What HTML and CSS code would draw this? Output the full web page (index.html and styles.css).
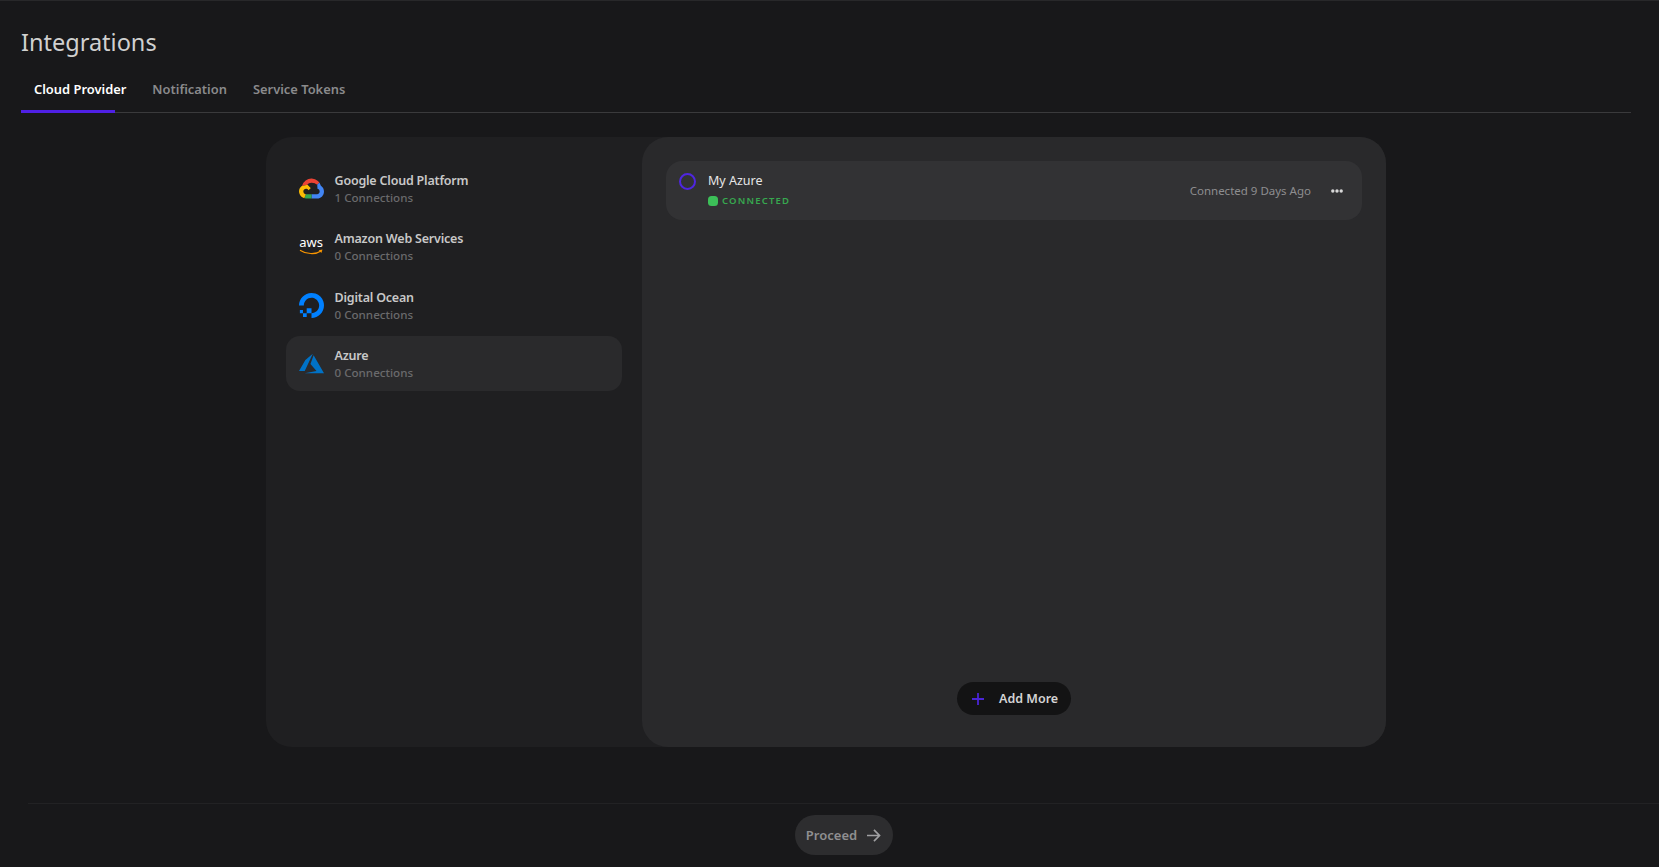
FILE: index.html
```html
<!DOCTYPE html>
<html lang="en">
<head>
    <meta charset="UTF-8">
    <meta name="viewport" content="width=device-width, initial-scale=1.0">
    <title>Integrations</title>
    <link rel="stylesheet" href="styles.css">
</head>
<body>

<div class="page">
    <header class="page-header">
        <h1>Integrations</h1>
        <nav class="tabs">
            <a href="#" class="tab active">Cloud Provider</a>
            <a href="#" class="tab">Notification</a>
            <a href="#" class="tab">Service Tokens</a>
            <span class="tab-indicator"></span>
        </nav>
    </header>

    <main class="content">
        <div class="card">
            <div class="providers">
                <div class="provider">
                    <svg class="provider-icon" viewBox="0 0 24 24">
                        <defs>
                            <clipPath id="gcp-clip">
                                <path d="M12.19 2.38a9.344 9.344 0 0 0-9.234 6.893c.053-.02-.055.013 0 0-3.875 2.551-3.922 8.11-.247 10.941l.006-.007-.007.03a6.717 6.717 0 0 0 4.077 1.356h5.173l.03.03h5.192c6.687.053 9.376-8.605 3.835-12.35a9.365 9.365 0 0 0-2.821-4.552l-.043.043.006-.05A9.344 9.344 0 0 0 12.19 2.38zm-.358 4.146c1.244-.04 2.518.368 3.486 1.15a5.186 5.186 0 0 1 1.862 4.078v.518c3.53-.07 3.53 5.262 0 5.193h-5.193l-.008.009v-.04H6.785a2.59 2.59 0 0 1-1.067-.23h.001a2.597 2.597 0 1 1 3.437-3.437l3.013-3.012A6.747 6.747 0 0 0 8.11 8.24c.018-.01.04-.026.054-.023a5.186 5.186 0 0 1 3.67-1.69z"/>
                            </clipPath>
                        </defs>
                        <g clip-path="url(#gcp-clip)">
                            <polygon fill="#ea4335" points="0,0 24,0 24,2 17.5,8.5 15,7 9,7.5 8.1,8.3 3,9.5 0,9"/>
                            <polygon fill="#4285f4" points="24,2 24,24 12,24 12,17 18,16 17.5,8.5"/>
                            <polygon fill="#34a853" points="12,24 4,24 6.8,17 12,17"/>
                            <polygon fill="#fbbc05" points="0,9 3,9.5 8.1,8.3 12.2,12.5 9.2,15.5 6.8,17 4,24 0,24"/>
                        </g>
                    </svg>
                    <div class="provider-text">
                        <div class="provider-name">Google Cloud Platform</div>
                        <div class="provider-count">1 Connections</div>
                    </div>
                </div>
                <div class="provider">
                    <div class="provider-icon aws-icon">
                        <span class="aws-word">aws</span>
                        <svg class="aws-smile" viewBox="0 0 24 6">
                            <path d="M.5 1.2C6 5 16 6 21.5 2" fill="none" stroke="#f79400" stroke-width="1.2"/>
                            <path d="M19.2 1.2l3.8-.6-1.1 3.4z" fill="#f79400"/>
                        </svg>
                    </div>
                    <div class="provider-text">
                        <div class="provider-name">Amazon Web Services</div>
                        <div class="provider-count">0 Connections</div>
                    </div>
                </div>
                <div class="provider">
                    <svg class="provider-icon" viewBox="0 0 24 24">
                        <path fill="#0080ff" d="M12.04 0C5.408-.02.005 5.37.005 11.992h4.638c0-4.923 4.882-8.731 10.064-6.855a6.95 6.95 0 014.147 4.148c1.889 5.177-1.924 10.055-6.84 10.064v-4.61H7.391v4.623h4.61V24c7.86 0 13.967-7.588 11.397-15.83-1.115-3.59-3.985-6.446-7.575-7.575A12.8 12.8 0 0012.039 0zM7.39 19.362H3.828v3.564H7.39zm-3.563 0v-2.978H.85v2.978z"/>
                    </svg>
                    <div class="provider-text">
                        <div class="provider-name">Digital Ocean</div>
                        <div class="provider-count">0 Connections</div>
                    </div>
                </div>
                <div class="provider selected">
                    <svg class="provider-icon" viewBox="0 0 24 24">
                        <path fill="#0072c6" d="M5.483 21.3H24L14.025 4.013l-3.038 8.347 5.836 6.938L5.483 21.3zM13.23 2.7L6.105 8.677 0 19.253h5.505v.014L13.23 2.7z"/>
                    </svg>
                    <div class="provider-text">
                        <div class="provider-name">Azure</div>
                        <div class="provider-count">0 Connections</div>
                    </div>
                </div>
            </div>

            <div class="connections">
                <div class="connection">
                    <span class="radio"></span>
                    <div class="connection-text">
                        <div class="connection-name">My Azure</div>
                        <div class="connection-status"><span class="status-dot"></span>CONNECTED</div>
                    </div>
                    <span class="connection-time">Connected 9 Days Ago</span>
                    <svg class="more-icon" viewBox="0 0 12 4">
                        <circle cx="1.8" cy="2" r="1.7"/>
                        <circle cx="6" cy="2" r="1.7"/>
                        <circle cx="10.2" cy="2" r="1.7"/>
                    </svg>
                </div>
                <button class="add-more">
                    <svg class="plus-icon" viewBox="0 0 12 12">
                        <path d="M6 0v12M0 6h12" stroke="#4a25d6" stroke-width="1.8"/>
                    </svg>
                    Add More
                </button>
            </div>
        </div>
    </main>

    <footer class="page-footer">
        <button class="proceed">
            Proceed
            <svg class="arrow-icon" viewBox="0 0 16 14">
                <path d="M1 7h13.5M8.5 1l6 6-6 6" fill="none" stroke="#a0a0a2" stroke-width="1.8"/>
            </svg>
        </button>
    </footer>
</div>

</body>
</html>
```

FILE: styles.css
```css
* {
    box-sizing: border-box;
}
body {
    font-family: "Noto Sans", Arial, sans-serif;
    margin: 0;
    padding: 0;
    background-color: #18181a;
    color: #d4d4d4;
}
.page {
    height: 100vh;
    overflow: hidden;
    border-top: 1px solid #28282a;
    display: flex;
    flex-direction: column;
}
.page-header {
    padding: 25px 28px 0 21px;
}
h1 {
    margin: 0;
    font-size: 23.5px;
    font-weight: 400;
    line-height: 32px;
    color: #d0d0d0;
}
.tabs {
    position: relative;
    display: flex;
    margin-top: 7px;
    height: 48px;
    border-bottom: 1px solid #3a3a3c;
}
.tab {
    padding: 14px 13px 0;
    font-size: 12.9px;
    font-weight: 600;
    line-height: 20px;
    text-decoration: none;
    color: #8a8a8c;
}
.tab.active {
    color: #fff;
}
.tab-indicator {
    position: absolute;
    left: 0;
    bottom: -1px;
    width: 94px;
    height: 3px;
    background-color: #4f20e5;
}
.content {
    padding: 24px 28px 0 21px;
    display: flex;
    justify-content: center;
}
.card {
    width: 1120px;
    height: 610px;
    display: flex;
    background-color: #1f1f21;
    border-radius: 26px;
}
.providers {
    width: 376px;
    padding: 23.2px 20px;
    display: flex;
    flex-direction: column;
    gap: 2.8px;
}
.provider {
    height: 55.7px;
    padding: 0 12.5px;
    display: flex;
    align-items: center;
    gap: 11px;
    border-radius: 14px;
}
.provider.selected {
    background-color: #2a2a2c;
}
.provider-icon {
    width: 25px;
    height: 25px;
    flex-shrink: 0;
}
.aws-icon {
    display: flex;
    flex-direction: column;
    align-items: center;
    justify-content: center;
}
.aws-word {
    margin-top: -2px;
    font-size: 13px;
    font-weight: 400;
    line-height: 12px;
    color: #fff;
}
.aws-smile {
    width: 25px;
    height: 6px;
    margin-top: 1px;
    display: block;
}
.provider-name {
    font-size: 12.5px;
    font-weight: 600;
    line-height: 20px;
    letter-spacing: -0.2px;
    color: #c8c8c8;
}
.provider-count {
    margin-top: -2px;
    font-size: 11.6px;
    font-weight: 500;
    line-height: 17px;
    color: #6a6a6c;
}
.connections {
    flex: 1;
    padding: 24px 24px 32px;
    display: flex;
    flex-direction: column;
    background-color: #29292b;
    border-radius: 26px;
}
.connection {
    height: 59px;
    padding: 10px 19px 0 13px;
    display: flex;
    align-items: flex-start;
    background-color: #323234;
    border-radius: 16px;
}
.radio {
    width: 17px;
    height: 17px;
    margin-top: 1.5px;
    border: 2px solid #4f26e0;
    border-radius: 50%;
}
.connection-text {
    flex: 1;
    margin-left: 12px;
}
.connection-name {
    font-size: 12.5px;
    line-height: 20px;
    color: #e6e6e6;
}
.connection-status {
    margin-top: 4px;
    display: flex;
    align-items: center;
    gap: 4px;
    font-size: 9.5px;
    font-weight: 600;
    line-height: 12px;
    letter-spacing: 1.2px;
    color: #37a84f;
}
.status-dot {
    width: 10px;
    height: 10px;
    border-radius: 3.5px;
    background-color: #3cbf58;
}
.connection-time {
    margin-top: 11px;
    font-size: 11.5px;
    line-height: 18px;
    color: #8e8e90;
}
.more-icon {
    width: 12px;
    height: 4px;
    margin: 18px 0 0 20px;
    fill: #d8d8d8;
}
.add-more {
    margin-top: auto;
    align-self: center;
    width: 114px;
    height: 33px;
    padding: 0 0 0 15px;
    display: flex;
    align-items: center;
    gap: 15px;
    border: 0;
    border-radius: 17px;
    background-color: #131314;
    font-family: inherit;
    font-size: 12.5px;
    font-weight: 600;
    color: #d4d4d4;
}
.plus-icon {
    width: 12px;
    height: 12px;
}
.page-footer {
    margin: 56px 0 0 28px;
    padding-top: 11px;
    border-top: 1px solid #222224;
    display: flex;
    justify-content: center;
}
.proceed {
    width: 98px;
    height: 40px;
    display: flex;
    align-items: center;
    justify-content: center;
    gap: 9px;
    border: 0;
    border-radius: 20px;
    background-color: #2d2d2f;
    font-family: inherit;
    font-size: 13px;
    font-weight: 600;
    color: #8f8f91;
}
.arrow-icon {
    width: 15px;
    height: 13px;
}
```
